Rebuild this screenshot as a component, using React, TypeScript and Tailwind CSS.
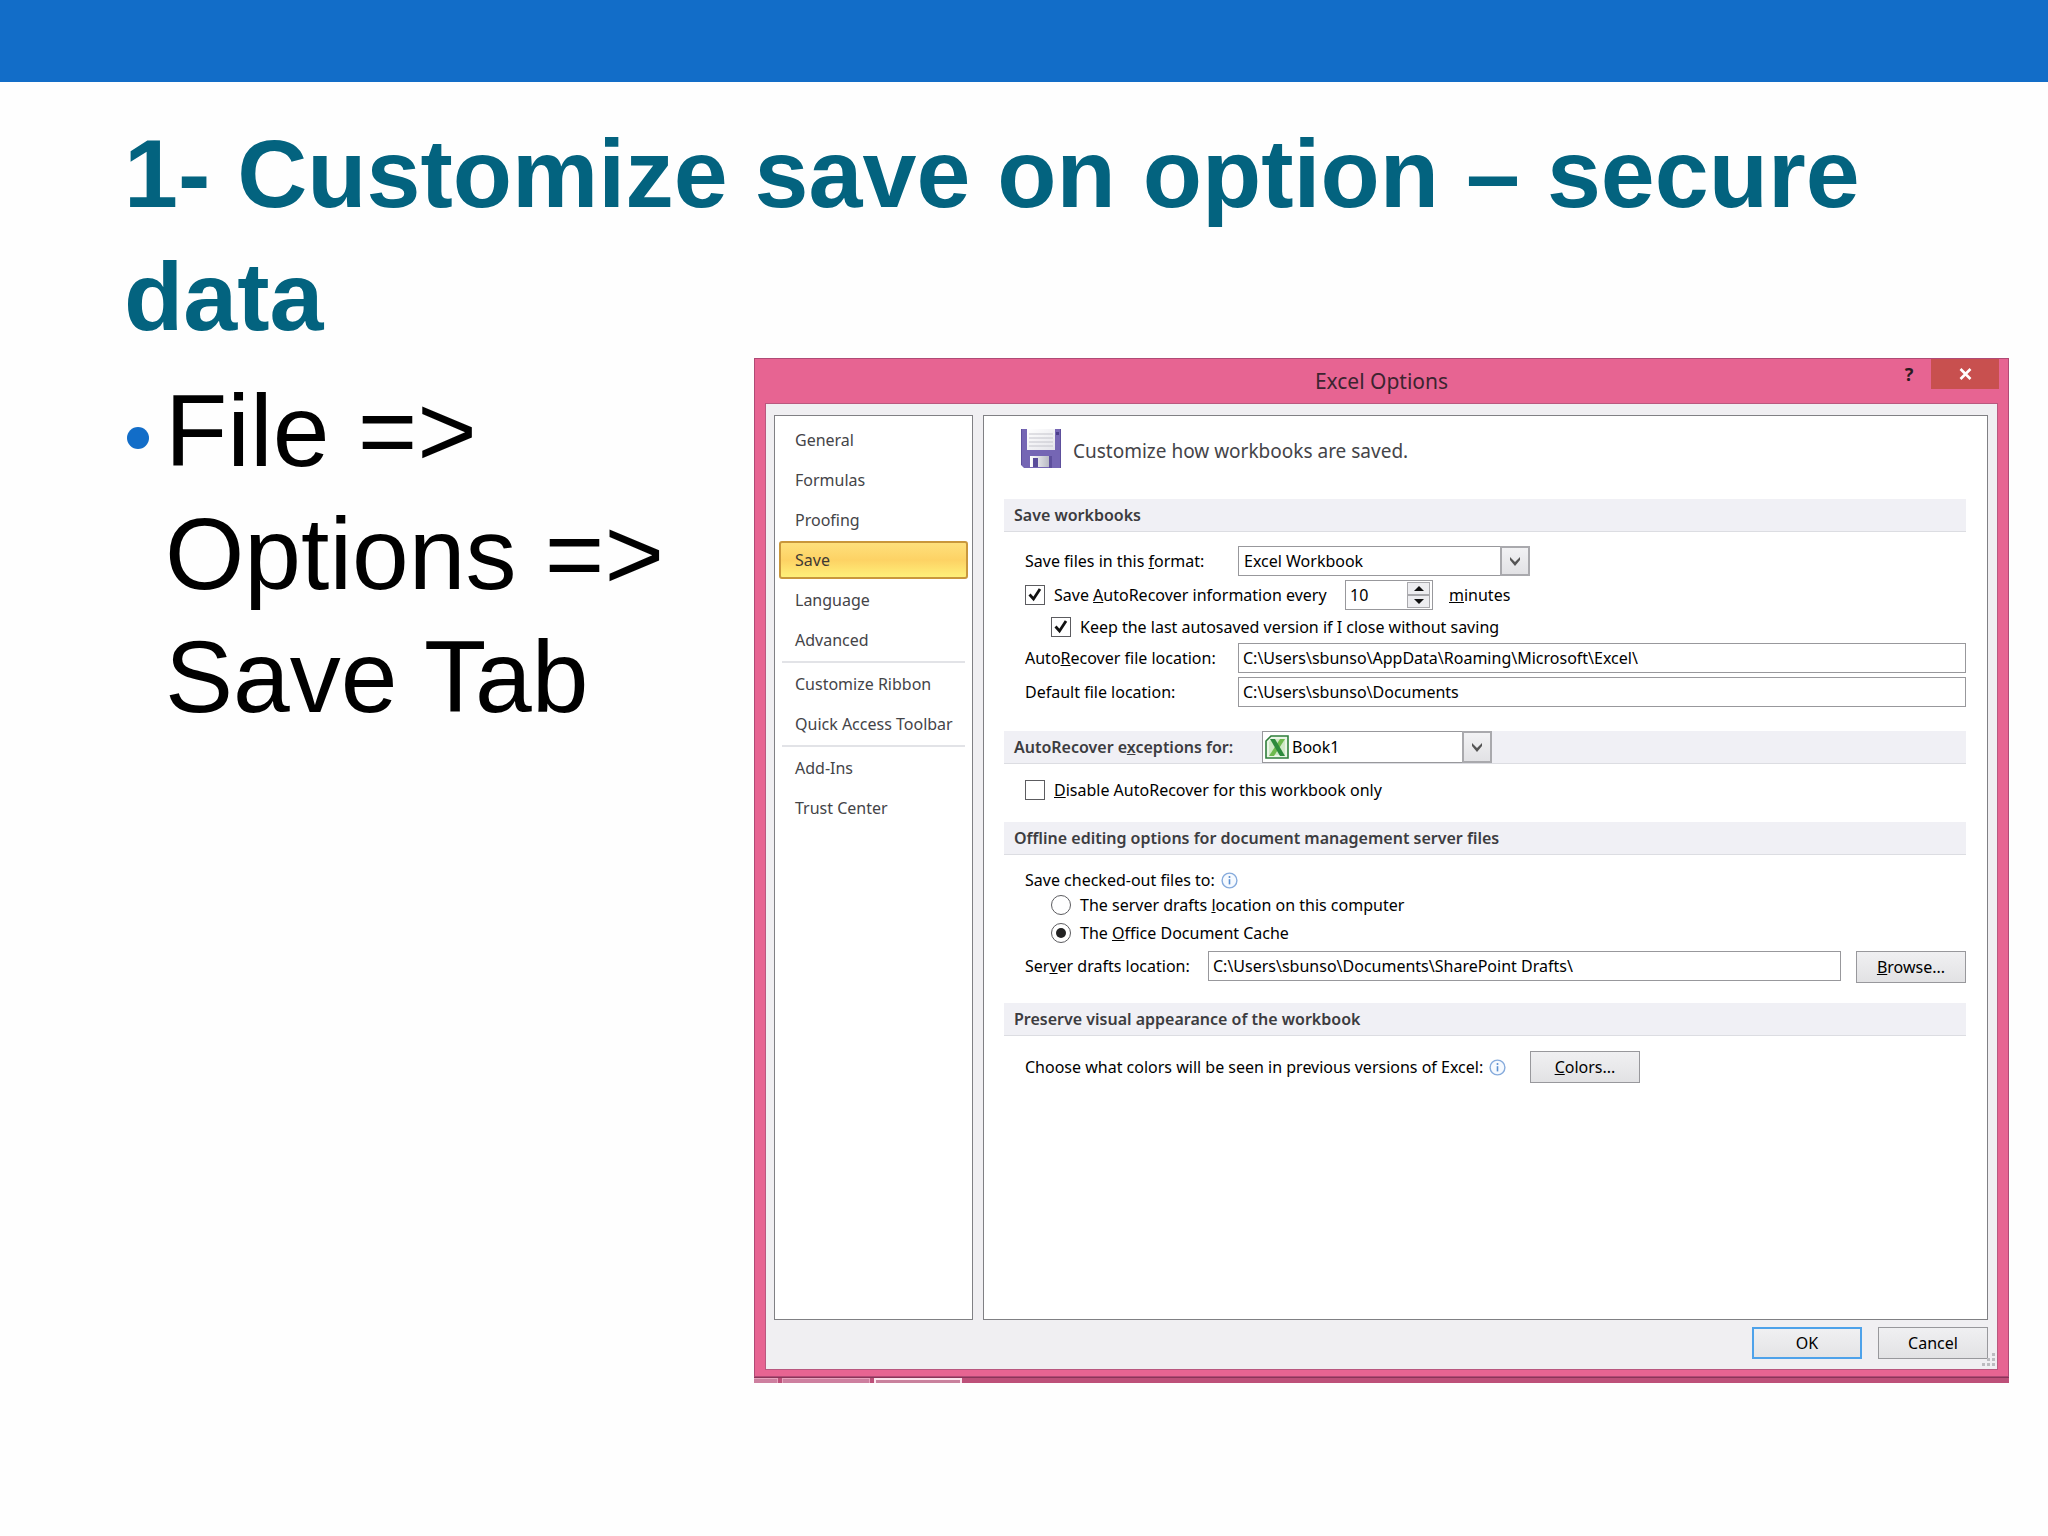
import { Fragment, type ReactNode } from "react";

const navGroups = [
  ["General", "Formulas", "Proofing", "Save", "Language", "Advanced"],
  ["Customize Ribbon", "Quick Access Toolbar"],
  ["Add-Ins", "Trust Center"],
];

function SectionBar({ children }: { children: ReactNode }) {
  return (
    <div className="flex h-[33px] items-center border-b border-[#dcdde2] bg-[#f0f0f5] pl-[10px] font-semibold text-[#3c3c40]">
      {children}
    </div>
  );
}

function Chevron() {
  return (
    <span className="pointer-events-none absolute inset-y-0 right-0 flex w-[30px] items-center justify-center border-2 border-[#a9a9ad] bg-linear-to-b from-[#f2f2f4] to-[#e2e2e5]">
      <svg width="12" height="12" viewBox="0 0 12 12" fill="none">
        <path d="M1 2v3l5 6 5-6V2L6 7z" fill="#555" />
      </svg>
    </span>
  );
}

function InfoIcon() {
  return (
    <svg width="17" height="17" viewBox="0 0 17 17" fill="none" className="shrink-0">
      <circle cx="8.5" cy="8.5" r="7.4" fill="#f6faff" stroke="#86abdc" strokeWidth="1.4" />
      <path d="M8.5 7.2v5.2" stroke="#5b8fd0" strokeWidth="1.6" />
      <circle cx="8.5" cy="5" r="1" fill="#5b8fd0" />
    </svg>
  );
}

function CheckBox({ id, checked }: { id: string; checked?: boolean }) {
  return (
    <span className="relative h-5 w-5 shrink-0">
      <input
        id={id}
        type="checkbox"
        defaultChecked={checked}
        className="peer block h-5 w-5 appearance-none border border-[#5c5c60] bg-white"
      />
      <svg
        viewBox="0 0 20 20"
        className="pointer-events-none absolute inset-0 hidden h-5 w-5 peer-checked:block"
      >
        <path d="M4.5 9.5l4 4.5 6.5-10" fill="none" stroke="#111" strokeWidth="2.8" />
      </svg>
    </span>
  );
}

function Radio({ id, checked }: { id: string; checked?: boolean }) {
  return (
    <span className="relative h-5 w-5 shrink-0">
      <input
        id={id}
        type="radio"
        name="checkout"
        defaultChecked={checked}
        className="peer block h-5 w-5 appearance-none rounded-full border border-[#5c5c60] bg-white"
      />
      <span className="pointer-events-none absolute inset-[5px] hidden rounded-full bg-[#222] peer-checked:block" />
    </span>
  );
}

function FloppyIcon() {
  return (
    <svg width="40" height="40" viewBox="0 0 40 40" className="shrink-0">
      <defs>
        <linearGradient id="paper" x1="0" y1="0" x2="1" y2="1">
          <stop offset="0" stopColor="#fff" />
          <stop offset="1" stopColor="#e4e4ea" />
        </linearGradient>
        <linearGradient id="shutter" x1="0" y1="0" x2="1" y2="0">
          <stop offset="0" stopColor="#fff" />
          <stop offset="1" stopColor="#b9bac4" />
        </linearGradient>
      </defs>
      <path d="M0 0h40v39H3l-3-3z" fill="#7566b4" />
      <path d="M0 0h1v36H0zM39 0h1v39h-1z" fill="#5d4f9c" />
      <path d="M35 3h3v3h-3z" fill="#4b3d8a" />
      <path d="M6 0h28v21H6z" fill="url(#paper)" />
      <path d="M8 5h24M8 9h24M8 13h24M8 17h24" stroke="#c4c4cc" />
      <path d="M9 27h19v11H9z" fill="url(#shutter)" />
      <path d="M12 29h5v9h-5z" fill="#5a4c9a" />
      <path d="M28 27h3v12h-3z" fill="#5d4f9c" />
    </svg>
  );
}

function WorkbookIcon() {
  return (
    <svg
      width="24"
      height="24"
      viewBox="0 0 24 24"
      className="pointer-events-none absolute top-1 left-[3px]"
    >
      <path d="M6 1h17v22H1V6z" fill="#eaf6e6" stroke="#2f7f3b" strokeWidth="1.6" />
      <path d="M4 7l3-3h13v16H4z" fill="#cfe9c6" />
      <path d="M15 4h5L9 21H4z" fill="#6dba4d" />
      <path d="M5 4h5l10 17h-5z" fill="#2c8a3c" />
    </svg>
  );
}

function PushButton({ children, primary }: { children: ReactNode; primary?: boolean }) {
  return (
    <button
      type="button"
      className={
        primary
          ? "h-8 w-[110px] shrink-0 border-2 border-[#4ea2ea] bg-linear-to-b from-[#f0f0f2] to-[#e4e4e6]"
          : "h-8 w-[110px] shrink-0 border border-[#98989c] bg-linear-to-b from-[#f0f0f2] to-[#e2e2e4]"
      }
    >
      {children}
    </button>
  );
}

function OptionsDialog() {
  return (
    <section className="min-w-0 flex-1 font-['Noto_Sans',sans-serif] text-base/5 text-black">
      <div className="border border-[#b04a75] bg-[#e76492] px-[10px] pb-[6px]">
        {/* Title bar */}
        <div className="relative flex h-11 justify-center">
          <h2 className="pt-2 text-[21px]/7 text-[#3c2430]">Excel Options</h2>
          <div className="absolute top-0 -right-px flex">
            <button
              type="button"
              aria-label="Help"
              className="h-[30px] w-11 text-lg/7 font-bold text-[#2a1a20]"
            >
              ?
            </button>
            <button
              type="button"
              aria-label="Close"
              className="flex h-[30px] w-[68px] items-center justify-center bg-[#c8504f]"
            >
              <svg width="13" height="12" viewBox="0 0 13 12">
                <path d="M1.500 1l10 10M11.500 1l-10 10" stroke="#fff" strokeWidth="2.600" />
              </svg>
            </button>
          </div>
        </div>

        <div className="border border-[#b9587f] bg-[#f0eff2] pt-[11px] pr-[9px] pl-2">
          <div className="flex min-h-[905px] gap-[10px]">
            {/* Categories */}
            <nav className="w-[199px] shrink-0 border border-[#808084] bg-white px-[4px] pt-[4px]">
              {navGroups.map((group, i) => (
                <Fragment key={group[0]}>
                  {i > 0 && <hr className="mx-[3px] my-px border-t-2 border-[#e2e3e7]" />}
                  <ul>
                    {group.map((item) => (
                      <li key={item} className="py-px">
                        <a
                          href="#"
                          className={
                            item === "Save"
                              ? "flex h-[38px] items-center rounded-[3px] border-2 border-[#c9973c] bg-linear-to-b from-[#fee07c] via-[#fdd264] to-[#fef079] pl-[14px] text-[#3f3a33]"
                              : "flex h-[38px] items-center pl-4 whitespace-nowrap text-[#444448]"
                          }
                        >
                          {item}
                        </a>
                      </li>
                    ))}
                  </ul>
                </Fragment>
              ))}
            </nav>

            {/* Save page */}
            <form className="min-w-0 flex-1 border border-[#808084] bg-white pr-[21px] pl-[20px]">
              <div className="flex h-[83px] gap-3 pt-[13px] pl-[17px]">
                <FloppyIcon />
                <p className="pt-2 text-[19px]/7 text-[#444448]">
                  Customize how workbooks are saved.
                </p>
              </div>

              <SectionBar>Save workbooks</SectionBar>
              <div className="flex flex-col gap-1 pt-[14px] pb-6 pl-[21px]">
                <div className="flex h-[30px] items-center">
                  <label htmlFor="format" className="w-[213px] shrink-0">
                    Save files in this <u>f</u>ormat:
                  </label>
                  <div className="relative h-[30px] w-[292px]">
                    <select
                      id="format"
                      className="h-full w-full appearance-none border border-[#98989c] bg-white pl-[5px]"
                    >
                      <option>Excel Workbook</option>
                    </select>
                    <Chevron />
                  </div>
                </div>
                <div className="flex h-[30px] items-center">
                  <CheckBox id="autorecover" checked />
                  <label htmlFor="autorecover" className="w-[300px] shrink-0 pl-[9px]">
                    Save <u>A</u>utoRecover information every
                  </label>
                  <div className="flex h-[30px] w-[88px] border border-[#98989c] bg-white py-px pr-[2px]">
                    <input
                      id="minutes"
                      type="text"
                      inputMode="numeric"
                      defaultValue="10"
                      className="min-w-0 flex-1 pl-1"
                    />
                    <div className="flex w-[23px] flex-col">
                      <button
                        type="button"
                        aria-label="More minutes"
                        className="flex flex-1 items-center justify-center border border-[#a9a9ad] bg-[#ededf0]"
                      >
                        <svg width="10" height="5" viewBox="0 0 10 5">
                          <path d="M0 5l5-5 5 5z" fill="#111" />
                        </svg>
                      </button>
                      <button
                        type="button"
                        aria-label="Fewer minutes"
                        className="flex flex-1 items-center justify-center border border-[#a9a9ad] bg-[#ededf0]"
                      >
                        <svg width="10" height="5" viewBox="0 0 10 5">
                          <path d="M0 0l5 5 5-5z" fill="#111" />
                        </svg>
                      </button>
                    </div>
                  </div>
                  <label htmlFor="minutes" className="pl-4">
                    <u>m</u>inutes
                  </label>
                </div>
                <div className="flex h-[25px] items-center pl-[26px]">
                  <CheckBox id="keep" checked />
                  <label htmlFor="keep" className="pl-[9px]">
                    Keep the last autosaved version if I close without saving
                  </label>
                </div>
                <div className="flex h-[30px] items-center">
                  <label htmlFor="recover-path" className="w-[213px] shrink-0">
                    Auto<u>R</u>ecover file location:
                  </label>
                  <input
                    id="recover-path"
                    defaultValue="C:\Users\sbunso\AppData\Roaming\Microsoft\Excel\"
                    className="h-full min-w-0 flex-1 border border-[#98989c] bg-white pl-1"
                  />
                </div>
                <div className="flex h-[30px] items-center">
                  <label htmlFor="default-path" className="w-[213px] shrink-0">
                    Default f<u>i</u>le location:
                  </label>
                  <input
                    id="default-path"
                    defaultValue="C:\Users\sbunso\Documents"
                    className="h-full min-w-0 flex-1 border border-[#98989c] bg-white pl-1"
                  />
                </div>
              </div>

              <SectionBar>
                <label htmlFor="book" className="w-[248px] shrink-0">
                  AutoRecover e<u>x</u>ceptions for:
                </label>
                <div className="relative h-8 w-[230px] font-normal text-black">
                  <select
                    id="book"
                    className="h-full w-full appearance-none border border-[#98989c] bg-white pl-[29px]"
                  >
                    <option>Book1</option>
                  </select>
                  <WorkbookIcon />
                  <Chevron />
                </div>
              </SectionBar>
              <div className="flex items-center pt-4 pb-[22px] pl-[21px]">
                <CheckBox id="disable" />
                <label htmlFor="disable" className="pl-[9px]">
                  <u>D</u>isable AutoRecover for this workbook only
                </label>
              </div>

              <SectionBar>Offline editing options for document management server files</SectionBar>
              <div className="pt-[14px] pb-[20px] pl-[21px]">
                <div className="flex h-[22px] items-center gap-[6px]">
                  Save checked-out files to:
                  <InfoIcon />
                </div>
                <div className="flex h-7 items-center pl-[26px]">
                  <Radio id="drafts" />
                  <label htmlFor="drafts" className="pl-[9px]">
                    The server drafts <u>l</u>ocation on this computer
                  </label>
                </div>
                <div className="flex h-7 items-center pl-[26px]">
                  <Radio id="cache" checked />
                  <label htmlFor="cache" className="pl-[9px]">
                    The <u>O</u>ffice Document Cache
                  </label>
                </div>
                <div className="flex items-start pt-1">
                  <label htmlFor="drafts-path" className="w-[183px] shrink-0 pt-[5px]">
                    Ser<u>v</u>er drafts location:
                  </label>
                  <input
                    id="drafts-path"
                    defaultValue="C:\Users\sbunso\Documents\SharePoint Drafts\"
                    className="mr-[15px] h-[30px] min-w-0 flex-1 border border-[#98989c] bg-white pl-1"
                  />
                  <PushButton>
                    <u>B</u>rowse...
                  </PushButton>
                </div>
              </div>

              <SectionBar>Preserve visual appearance of the workbook</SectionBar>
              <div className="flex items-center pt-[15px] pl-[21px]">
                <span className="flex w-[505px] items-center gap-[6px]">
                  Choose what colors will be seen in previous versions of Excel:
                  <InfoIcon />
                </span>
                <PushButton>
                  <u>C</u>olors...
                </PushButton>
              </div>
            </form>
          </div>

          <div className="relative flex h-[49px] justify-end gap-4 pt-[7px]">
            <PushButton primary>OK</PushButton>
            <PushButton>Cancel</PushButton>
            <svg
              width="14"
              height="14"
              viewBox="0 0 14 14"
              fill="#bcbcc0"
              className="absolute -right-2 bottom-[2px]"
            >
              <path d="M10 0h3v3h-3zM5 5h3v3H5zM10 5h3v3h-3zM0 10h3v3H0zM5 10h3v3H5zM10 10h3v3h-3z" />
            </svg>
          </div>
        </div>
      </div>

      {/* Edge of the sheet tabs behind the dialog */}
      <div className="flex h-[6px] gap-1 border-t border-[#8c3358] bg-[#bd5079]">
        <div className="w-6 border-t border-r border-[#e8a3bd] bg-[#cd7f9f]" />
        <div className="w-[88px] border border-b-0 border-[#e8a3bd] bg-[#cd7f9f]" />
        <div className="w-[88px] border-2 border-b-0 border-[#fbe3ec] bg-[#c9819d]" />
      </div>
    </section>
  );
}

export default function App() {
  return (
    <main className="min-h-screen bg-[#fefefe] font-['Liberation_Sans',Arial,sans-serif]">
      <div className="h-[82px] bg-[#126dc8]" />
      <h1 className="px-[124px] pt-[30px] text-[97px]/[123px] font-bold text-[#03637f]">
        1- Customize save on option – secure data
      </h1>
      <div className="flex items-start pr-[39px]">
        <ul className="w-[754px] shrink-0 pt-3 pr-8 pl-[127px] text-[102px]/[123px] text-black">
          <li className="flex">
            <span className="mt-[57px] mr-4 h-[22px] w-[22px] shrink-0 rounded-full bg-[#126dc8]" />
            <span>File =&gt; Options =&gt; Save Tab</span>
          </li>
        </ul>
        <OptionsDialog />
      </div>
    </main>
  );
}
